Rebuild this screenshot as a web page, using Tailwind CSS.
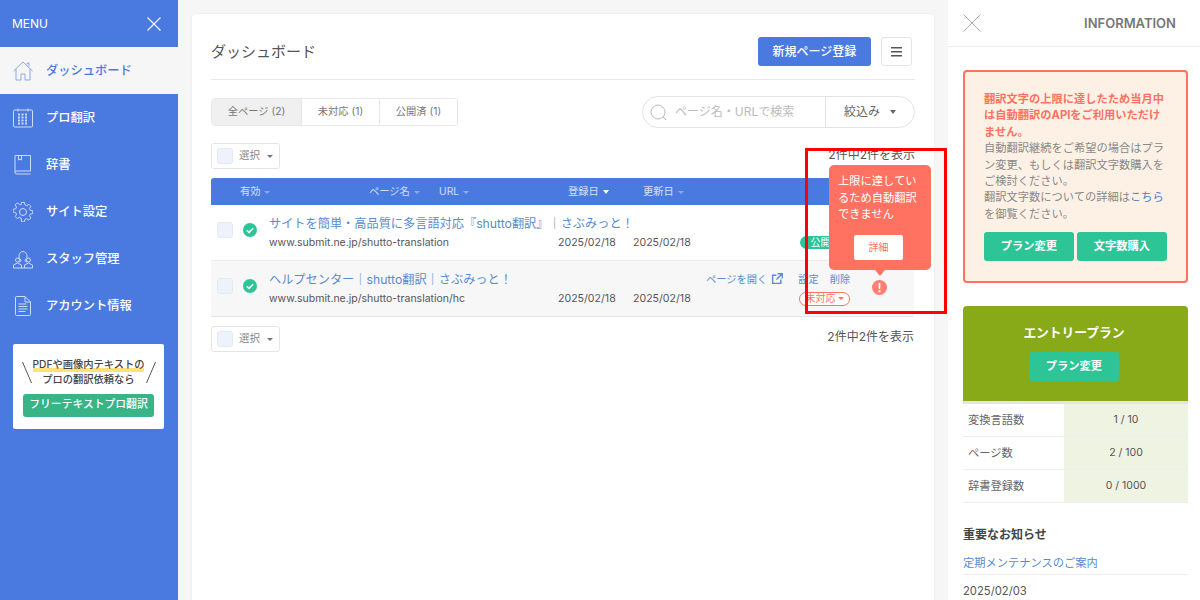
<!DOCTYPE html>
<html lang="ja">
<head>
<meta charset="utf-8">
<title>ダッシュボード</title>
<script src="https://cdn.jsdelivr.net/npm/@tailwindcss/browser@4"></script>
</head>
<body class="m-0 overflow-hidden bg-[#f6f6f6] font-['Inter','Noto_Sans_CJK_JP',sans-serif] text-[#555]">
<div class="relative flex h-[600px] w-[1200px] overflow-hidden">

  <!-- Sidebar -->
  <aside class="flex h-full w-[178px] shrink-0 flex-col bg-[#4a7ae0] text-white">
    <div class="flex h-[47px] items-center justify-between pl-3 pr-[17px]">
      <span class="text-[12px]">MENU</span>
      <svg class="h-[14px] w-[14px]" viewBox="0 0 14 14" fill="none" stroke="#fff" stroke-width="1.1"><path d="M.5.5l13 13M13.500.5l-13 13"/></svg>
    </div>
    <nav class="flex flex-col">
      <a class="flex h-[47px] items-center gap-[13px] bg-[#f6f6f6] pl-[13px] text-[12.25px] font-medium text-[#4a7ae0]">
        <svg class="h-5 w-5" viewBox="0 0 20 20" fill="none" stroke="#8aa9ea" stroke-width="1"><path d="M.5 10L10 1l9.500 9M3 8v11h5v-6h4v6h5V8M14 3.500V2h2v3.500"/></svg>
        <span class="mt-[2px]">ダッシュボード</span>
      </a>
      <a class="flex h-[47px] items-center gap-[13px] pl-[13px] text-[12.25px] font-medium">
        <svg class="h-5 w-5" viewBox="0 0 20 20" fill="none" stroke="#cfdcf7" stroke-width="1"><rect x=".5" y="2" width="19" height="17" rx="1"/><path d="M5 .5v3M15 .5v3" /><path d="M5 6.500h10M5 9.500h10M5 12.500h10M5 15.500h10" stroke-width="2" stroke-dasharray="2 1.500"/></svg>
        <span class="mt-[2px]">プロ翻訳</span>
      </a>
      <a class="flex h-[47px] items-center gap-[13px] pl-[13px] text-[12.25px] font-medium">
        <svg class="h-5 w-5" viewBox="0 0 20 20" fill="none" stroke="#cfdcf7" stroke-width="1"><path d="M2 .5h15.500v15.500H4Q2 16 2 17.500T4 19h13.500M2 17.500V.5M5.500 1v4l1.500-1 1.500 1V1"/></svg>
        <span class="mt-[2px]">辞書</span>
      </a>
      <a class="flex h-[47px] items-center gap-[13px] pl-[13px] text-[12.25px] font-medium">
        <svg class="h-5 w-5" viewBox="0 0 20 20" fill="none" stroke="#cfdcf7" stroke-width="1"><circle cx="10" cy="10" r="3.500"/><path d="M8.500 .8h3l.5 2.500 1.800.8 2.200-1.400 2.100 2.100-1.400 2.200.8 1.800 2.500.5v3l-2.500.5-.8 1.800 1.400 2.200-2.100 2.100-2.200-1.400-1.800.8-.5 2.500h-3L8 16.800l-1.800-.8L4 17.400l-2.100-2.100L3.300 13.100l-.8-1.800L0 10.800v-3l2.500-.5.8-1.800L1.900 3.300 4 1.200l2.200 1.400L8 3.300z" transform="translate(.3 -.3) scale(.97)"/></svg>
        <span class="mt-[2px]">サイト設定</span>
      </a>
      <a class="flex h-[47px] items-center gap-[13px] pl-[13px] text-[12.25px] font-medium">
        <svg class="h-5 w-5" viewBox="0 0 20 20" fill="none" stroke="#cfdcf7" stroke-width="1"><path d="M6 7a4 4.500 0 118 0c0 2-1 3-2 4v1l2 1M6 7c0 2 1 3 2 4v1l-2 1"/><circle cx="4.500" cy="11" r="2"/><circle cx="15.500" cy="11" r="2"/><path d="M.5 19v-3l4-2 4 2v3M19.500 19v-3l-4-2-4 2v3M.5 19h19"/></svg>
        <span class="mt-[2px]">スタッフ管理</span>
      </a>
      <a class="flex h-[47px] items-center gap-[13px] pl-[13px] text-[12.25px] font-medium">
        <svg class="h-5 w-5" viewBox="0 0 20 20" fill="none" stroke="#cfdcf7" stroke-width="1"><path d="M2.500 1.500Q2.500.5 3.500.5H12l5.500 5.500v12.500q0 1-1 1h-13q-1 0-1-1zM12 .5V6h5.500M5.500 8h8M5.500 10.500h9M5.500 13h9M5.500 15.500h7"/></svg>
        <span class="mt-[2px]">アカウント情報</span>
      </a>
    </nav>
    <div class="mx-[13px] mt-[15px] flex h-[85px] w-[151px] flex-col items-center rounded-[2px] bg-white pt-[13px] text-[#444]">
      <div class="flex items-center gap-[1px]">
        <svg class="h-[23px] w-[10px]" viewBox="0 0 10 23" fill="none" stroke="#555"><path d="M.5 1l9 21"/></svg>
        <div class="flex w-[112px] flex-col items-center whitespace-nowrap text-[10.25px] font-medium leading-[15px]">
          <span class="bg-[linear-gradient(transparent_75%,#ffe27a_75%)]">PDFや画像内テキストの</span>
          <span>プロの翻訳依頼なら</span>
        </div>
        <svg class="h-[23px] w-[10px]" viewBox="0 0 10 23" fill="none" stroke="#555"><path d="M9.500 1l-9 21"/></svg>
      </div>
      <div class="mt-[7px] flex h-[23px] w-[131px] items-center justify-center rounded-[3px] bg-[#38b487] text-[10.8px] font-medium text-white">フリーテキストプロ翻訳</div>
    </div>
  </aside>

  <!-- Main -->
  <main class="h-full w-[770px] shrink-0 pl-[14px] pr-[14px] pt-[14px]">
    <section class="h-[600px] rounded-t-[4px] bg-white px-[19px] shadow-[0_0_2px_rgba(0,0,0,.08)]">
      <header class="flex h-[66px] items-center justify-between border-b border-[#e8e8e8] pr-[3px] pt-[10px]">
        <h1 class="mt-[2px] text-[15px] font-normal text-[#555]">ダッシュボード</h1>
        <div class="flex gap-[10px]">
          <button class="flex h-[29px] w-[113px] items-center justify-center rounded-[3px] bg-[#4a7ae0] text-[12px] font-medium text-white">新規ページ登録</button>
          <button class="flex h-[29px] w-[31px] items-center justify-center rounded-[3px] border border-[#e4e4e4]">
            <svg class="h-[10px] w-[11px]" viewBox="0 0 11 10" fill="#555"><path d="M0 0h11v1.500H0zM0 4h11v1.500H0zM0 8h11v1.500H0z"/></svg>
          </button>
        </div>
      </header>

      <div class="mt-[16px] flex h-[32px] items-center justify-between">
        <div class="flex h-[28px] items-stretch overflow-hidden rounded-[4px] border border-[#e8e8e8] text-[10.25px] text-[#777]">
          <span class="flex w-[89px] items-center justify-center bg-[#f0f0f0]">全ページ (2)</span>
          <span class="flex w-[78px] items-center justify-center border-l border-[#e8e8e8]">未対応 (1)</span>
          <span class="flex w-[78px] items-center justify-center border-l border-[#e8e8e8]">公開済 (1)</span>
        </div>
        <div class="flex h-[32px] w-[273px] items-center rounded-full border border-[#e4e4e4]">
          <div class="flex h-full w-[183px] items-center gap-[8px] border-r border-[#e4e4e4] pl-[7px] text-[12px] text-[#bbb]">
            <svg class="h-[17px] w-[17px]" viewBox="0 0 17 17" fill="none" stroke="#bbb"><circle cx="8" cy="8" r="7"/><path d="M13 13l3 3"/></svg>
            ページ名・URLで検索
          </div>
          <div class="flex flex-1 items-center justify-center gap-[10px] text-[12px] text-[#666]">絞込み <span class="h-0 w-0 border-x-[3.5px] border-t-[4px] border-x-transparent border-t-[#666]"></span></div>
        </div>
      </div>

      <div class="mt-[15px] flex h-[26px] items-center justify-between">
        <div class="flex h-[26px] w-[69px] items-center gap-[6px] rounded-[3px] border border-[#e4e4e4] pl-[5px] text-[10.5px] text-[#888]">
          <span class="h-[16px] w-[16px] rounded-[3px] border border-[#e3eaf7] bg-[#eef3fb]"></span>選択<span class="ml-[1px] h-0 w-0 border-x-[3px] border-t-[3.5px] border-x-transparent border-t-[#777]"></span>
        </div>
        <span class="mb-[2px] text-[12px] text-[#555]">2件中2件を表示</span>
      </div>

      <div class="mt-[9px] w-[703px]">
        <div class="relative flex h-[27px] items-center rounded-t-[3px] bg-[#4a7ae0] text-[10.25px] text-[#d5e0f8]">
          <span class="ml-[29px] w-[129px]">有効 <span class="ml-[1px] inline-block h-0 w-0 border-x-[3px] border-t-[3.500px] border-x-transparent border-t-[#8eadee] align-middle"></span></span>
          <span class="w-[70px]">ページ名 <span class="ml-[1px] inline-block h-0 w-0 border-x-[3px] border-t-[3.500px] border-x-transparent border-t-[#8eadee] align-middle"></span></span>
          <span class="w-[129px]">URL <span class="ml-[1px] inline-block h-0 w-0 border-x-[3px] border-t-[3.500px] border-x-transparent border-t-[#8eadee] align-middle"></span></span>
          <span class="w-[75px]">登録日 <span class="ml-[1px] inline-block h-0 w-0 border-x-[3.500px] border-t-[4px] border-x-transparent border-t-white align-middle"></span></span>
          <span>更新日 <span class="ml-[1px] inline-block h-0 w-0 border-x-[3px] border-t-[3.500px] border-x-transparent border-t-[#8eadee] align-middle"></span></span>
        </div>

        <div class="relative flex h-[56px] items-center border-b border-[#ececec]">
          <span class="mb-[6px] ml-[6px] h-[16px] w-[16px] rounded-[3px] border border-[#e3eaf7] bg-[#eef3fb]"></span>
          <svg class="mb-[6px] ml-[10px] h-[14px] w-[14px]" viewBox="0 0 14 14"><circle cx="7" cy="7" r="7" fill="#2dc596"/><path d="M3.800 7.200l2.200 2.200 4.200-4.200" fill="none" stroke="#fff" stroke-width="1.600"/></svg>
          <div class="ml-[12px] flex w-[289px] flex-col">
            <a class="whitespace-nowrap text-[12.2px] leading-[18px] text-[#5a8ad0]">サイトを簡単・高品質に多言語対応『shutto翻訳』｜さぶみっと！</a>
            <span class="mt-[2px] text-[10.5px] leading-[16px] text-[#555]">www.submit.ne.jp/shutto-translation</span>
          </div>
          <span class="mt-[20px] w-[75px] text-[10.6px] text-[#555]">2025/02/18</span>
          <span class="mt-[20px] w-[167px] text-[10.6px] text-[#555]">2025/02/18</span>
          <span class="mt-[20px] flex h-[13px] w-[51px] items-center justify-center rounded-full bg-[#2dc596] text-[10px] text-white">公開済</span>
        </div>

        <div class="relative flex h-[56px] items-center border-b border-[#e4e4e4] bg-[#f7f7f7]">
          <span class="mb-[6px] ml-[6px] h-[16px] w-[16px] rounded-[3px] border border-[#e3eaf7] bg-[#eef3fb]"></span>
          <svg class="mb-[6px] ml-[10px] h-[14px] w-[14px]" viewBox="0 0 14 14"><circle cx="7" cy="7" r="7" fill="#2dc596"/><path d="M3.800 7.200l2.200 2.200 4.200-4.200" fill="none" stroke="#fff" stroke-width="1.600"/></svg>
          <div class="ml-[12px] flex w-[289px] flex-col">
            <a class="whitespace-nowrap text-[12.2px] leading-[18px] text-[#5a8ad0]">ヘルプセンター｜shutto翻訳｜さぶみっと！</a>
            <span class="mt-[2px] text-[10.5px] leading-[16px] text-[#555]">www.submit.ne.jp/shutto-translation/hc</span>
          </div>
          <span class="mt-[20px] w-[75px] text-[10.6px] text-[#555]">2025/02/18</span>
          <span class="mt-[20px] w-[73px] text-[10.6px] text-[#555]">2025/02/18</span>
          <div class="flex w-[180px] flex-col items-start">
            <div class="flex items-center whitespace-nowrap text-[10.25px] leading-[14px] text-[#5a8ad0]">
              <span class="flex items-center gap-[4px]">ページを開く
                <svg class="h-[12px] w-[12px]" viewBox="0 0 11 11" fill="none" stroke="#5a8ad0" stroke-width="1.300"><path d="M5 2H1.500v7.500H9V6M6 .7h4.300V5M10 1L5 6"/></svg>
              </span>
              <span class="ml-[15px]">設定</span>
              <span class="ml-[11px]">削除</span>
            </div>
            <span class="ml-[93px] mt-[6px] flex h-[14px] w-[51px] items-center justify-center gap-[2px] rounded-full border border-[#ff7161] bg-white text-[10px] text-[#ff7161]">未対応<span class="h-0 w-0 border-x-[3px] border-t-[3.500px] border-x-transparent border-t-[#ff7161]"></span></span>
          </div>
        </div>

        <div class="mt-[9px] flex h-[26px] items-center justify-between">
          <div class="flex h-[26px] w-[69px] items-center gap-[6px] rounded-[3px] border border-[#e4e4e4] pl-[5px] text-[10.5px] text-[#888]">
            <span class="h-[16px] w-[16px] rounded-[3px] border border-[#e3eaf7] bg-[#eef3fb]"></span>選択<span class="ml-[1px] h-0 w-0 border-x-[3px] border-t-[3.5px] border-x-transparent border-t-[#777]"></span>
          </div>
          <span class="mb-[4px] text-[12px] text-[#555]">2件中2件を表示</span>
        </div>
      </div>
    </section>
  </main>

  <!-- Right panel -->
  <aside class="h-full flex-1 bg-white">
    <div class="flex h-[47px] items-center justify-between border-b border-[#eee] pl-[15px] pr-[27px]">
      <svg class="h-[18px] w-[18px]" viewBox="0 0 19 19" fill="none" stroke="#aaa" stroke-width="1"><path d="M.5.5l18 18M18.500.5l-18 18"/></svg>
      <span class="mt-[1px] text-[13px] font-semibold text-[#777]">INFORMATION</span>
    </div>
    <div class="mx-[15px] mt-[23px] h-[213px] w-[225px] rounded-[4px] border-2 border-[#ff7161] bg-[#fdf1e5] px-[19px] pt-[19px]">
      <p class="text-[11.25px] font-bold leading-[16.4px] text-[#ff7161]">翻訳文字の上限に達したため当月中は自動翻訳のAPIをご利用いただけません。</p>
      <p class="text-[11.25px] leading-[16.4px] text-[#888]">自動翻訳継続をご希望の場合はプラン変更、もしくは翻訳文字数購入をご検討ください。<br>翻訳文字数についての詳細は<span class="text-[#4a7ac8]">こちら</span>を御覧ください。</p>
      <div class="mt-[10px] flex gap-[3px]">
        <button class="flex h-[29px] w-[90px] shrink-0 items-center justify-center rounded-[3px] bg-[#2dc596] text-[11.25px] font-bold text-white">プラン変更</button>
        <button class="flex h-[29px] w-[90px] shrink-0 items-center justify-center rounded-[3px] bg-[#2dc596] text-[11.25px] font-bold text-white">文字数購入</button>
      </div>
    </div>
    <div class="mx-[15px] mt-[23px] w-[225px]">
      <div class="flex h-[98px] flex-col items-center rounded-t-[4px] border-b-[3px] border-[#e4e4e4] bg-[#88aa18] pr-[3px] pt-[17px]">
        <span class="text-[12.75px] font-bold leading-[20px] text-white">エントリープラン</span>
        <button class="mt-[9px] flex h-[29px] w-[90px] items-center justify-center rounded-[3px] bg-[#2dc596] text-[11.25px] font-bold text-white">プラン変更</button>
      </div>
      <div class="flex h-[33px] items-center border-b border-[#eee]"><span class="w-[101px] pl-[5px] text-[11.25px] text-[#666]">変換言語数</span><span class="flex h-full flex-1 items-center justify-center bg-[#eef3e2] text-[10.5px] text-[#555]">1 / 10</span></div>
      <div class="flex h-[33px] items-center border-b border-[#eee]"><span class="w-[101px] pl-[5px] text-[11.25px] text-[#666]">ページ数</span><span class="flex h-full flex-1 items-center justify-center bg-[#eef3e2] text-[10.5px] text-[#555]">2 / 100</span></div>
      <div class="flex h-[33px] items-center border-b border-[#eee]"><span class="w-[101px] pl-[5px] text-[11.25px] text-[#666]">辞書登録数</span><span class="flex h-full flex-1 items-center justify-center bg-[#eef3e2] text-[10.5px] text-[#555]">0 / 1000</span></div>
      <h2 class="mt-[23px] text-[12px] font-bold leading-[18px] text-[#444]">重要なお知らせ</h2>
      <a class="mt-[11px] block border-b border-[#eee] pb-[2px] text-[11.25px] leading-[17px] text-[#5a8ad0]">定期メンテナンスのご案内</a>
      <p class="mt-[8px] text-[11.25px] leading-[16px] text-[#555]">2025/02/03</p>
    </div>
  </aside>

  <!-- Overlays -->
  <div class="absolute left-[805px] top-[148px] h-[166px] w-[142px] border-[3px] border-[#ff0000]"></div>
  <div class="absolute left-[829px] top-[165px] h-[105px] w-[102px] rounded-[5px] bg-[#ff7161] px-[9px] pt-[8px] text-white">
    <p class="text-[11.25px] leading-[16.5px]">上限に達しているため自動翻訳できません</p>
    <div class="ml-[16px] mt-[12px] flex h-[25px] w-[49px] items-center justify-center rounded-[2px] bg-white text-[10px] text-[#ff7161]">詳細</div>
    <span class="absolute left-[46px] top-[105px] h-0 w-0 border-x-[5px] border-t-[6px] border-x-transparent border-t-[#ff7161]"></span>
  </div>
  <svg class="absolute left-[872px] top-[280px] h-[15px] w-[15px]" viewBox="0 0 15 15"><circle cx="7.500" cy="7.500" r="7.500" fill="#ff7f73"/><path d="M6.500 3h2l-.3 6H6.800zM6.500 10.200h2v2h-2z" fill="#fff"/></svg>
</div>
</body>
</html>
